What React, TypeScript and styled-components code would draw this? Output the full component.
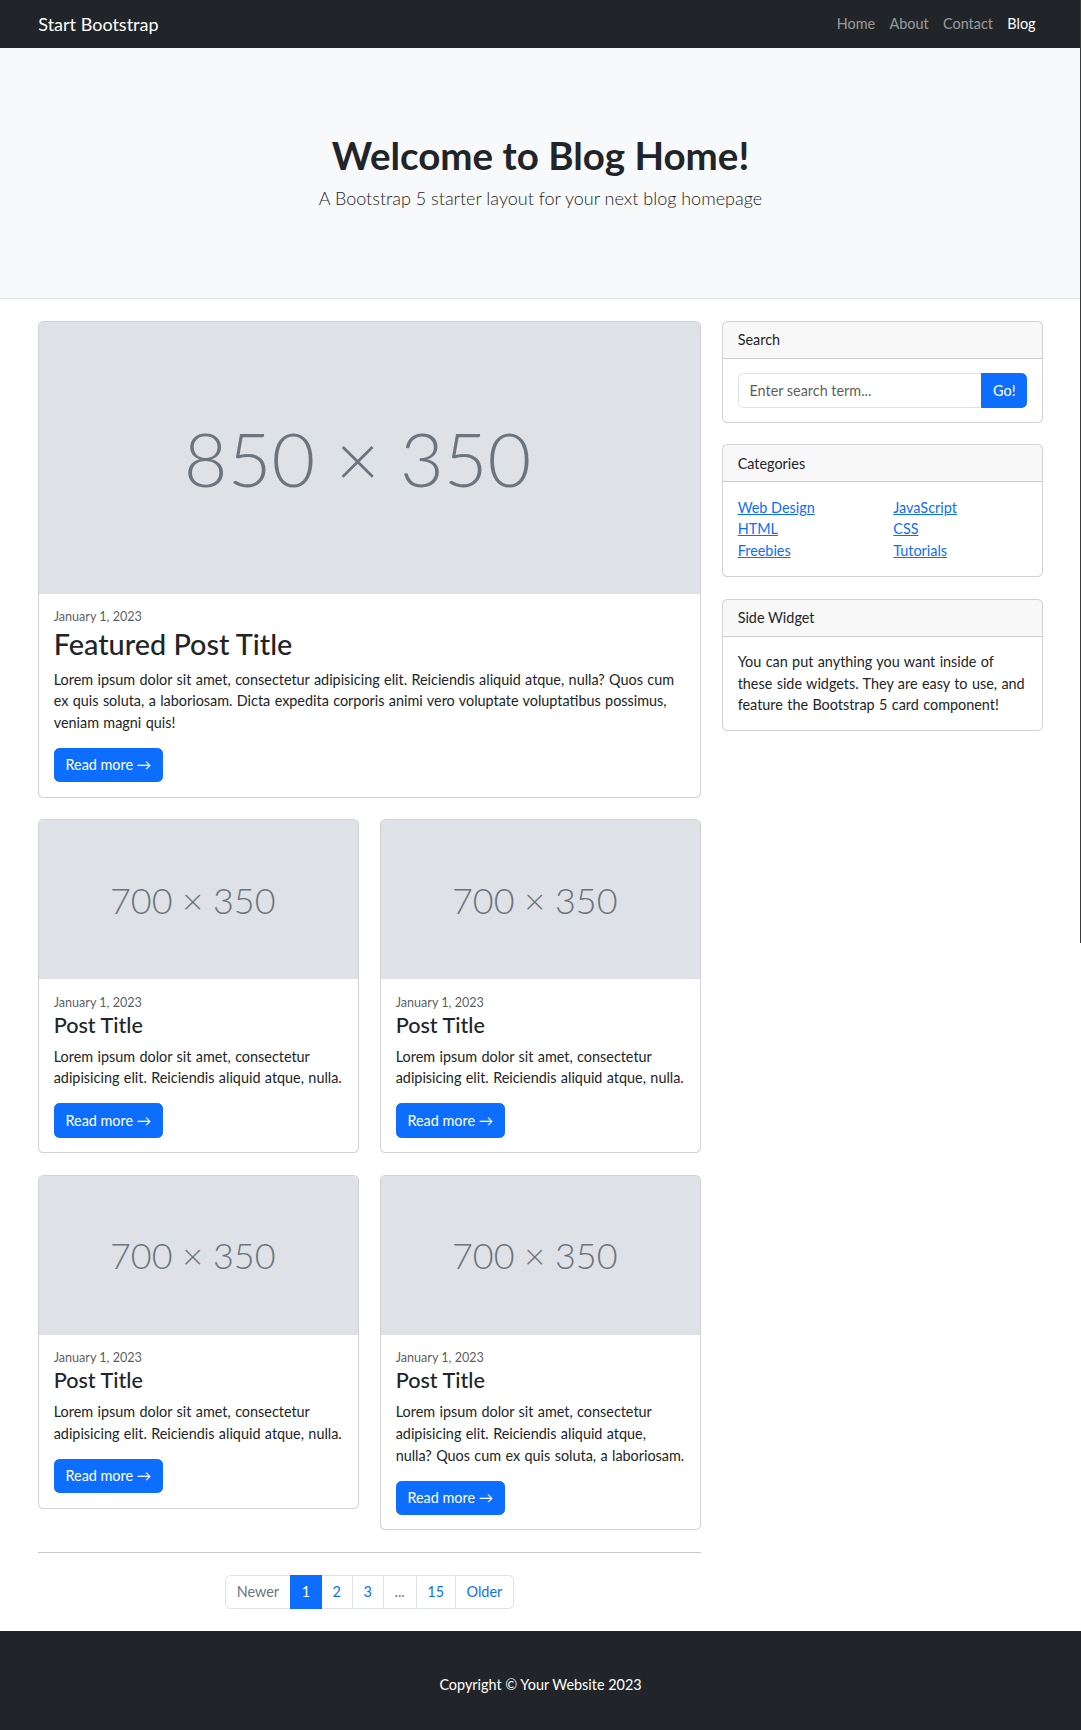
import React from 'react';
import styled, { createGlobalStyle, css } from 'styled-components';

const GlobalStyle = createGlobalStyle`
  html { font-size: 14.4px; }
  *, *::before, *::after { box-sizing: border-box; }
  body {
    margin: 0;
    font-family: "Segoe UI", Lato, "Noto Sans", sans-serif;
    font-size: 1rem;
    line-height: 1.5;
    color: #212529;
    background: #fff;
  }
`;

const Container = styled.div`
  width: 1026px;
  margin: 0 auto;
  padding: 0 10.8px;
`;

/* ---------- Navbar ---------- */
const Navbar = styled.nav`
  background: #212529;
  height: 48px;
  display: flex;
  align-items: center;
`;
const NavInner = styled(Container)`
  display: flex;
  align-items: center;
  justify-content: space-between;
`;
const Brand = styled.a`
  color: #fff;
  font-size: 1.25rem;
  text-decoration: none;
`;
const NavList = styled.ul`
  display: flex;
  list-style: none;
  margin: 0;
  padding: 0;
`;
const NavLink = styled.a<{ $active?: boolean }>`
  display: block;
  padding: 0 0.5rem;
  text-decoration: none;
  color: ${(p) => (p.$active ? '#fff' : 'rgba(255,255,255,0.55)')};
`;

/* ---------- Header ---------- */
const Header = styled.header`
  background: #f8f9fa;
  border-bottom: 1px solid #dee2e6;
  padding: 3rem 0;
  margin-bottom: 1.5rem;
`;
const HeaderInner = styled(Container)`
  text-align: center;
  margin-top: 3rem;
  margin-bottom: 3rem;
`;
const Title = styled.h1`
  font-size: 38.5px;
  font-weight: 700;
  line-height: 43.2px;
  margin: 0 0 0.5rem;
`;
const Lead = styled.p`
  font-size: 1.25rem;
  font-weight: 300;
  margin: 0;
`;

/* ---------- Layout ---------- */
const MainRow = styled.div`
  display: grid;
  grid-template-columns: calc((100% + 1.5rem) * 2 / 3 - 1.5rem) 1fr;
  column-gap: 1.5rem;
  align-items: start;
`;
const PostGrid = styled.div`
  display: grid;
  grid-template-columns: 1fr 1fr;
  column-gap: 1.5rem;
  align-items: start;
`;
const Column = styled.div`
  display: flex;
  flex-direction: column;
`;

/* ---------- Card ---------- */
const Card = styled.div`
  border: 1px solid rgba(0, 0, 0, 0.175);
  border-radius: 0.375rem;
  overflow: hidden;
  margin-bottom: 1.5rem;
  background: #fff;
`;
const Placeholder = styled.div<{ $ratio: string; $size: number }>`
  aspect-ratio: ${(p) => p.$ratio};
  background: #dee2e6;
  color: #6c757d;
  display: flex;
  align-items: center;
  justify-content: center;
  padding-right: 3.6%;
  font-family: "Segoe UI", Lato, "Noto Sans", sans-serif;
  font-weight: 300;
  font-size: ${(p) => p.$size}px;
  line-height: 1;
`;
const CardBody = styled.div`
  padding: 1rem;
`;
const CardHeader = styled.div`
  padding: 0.5rem 1rem;
  background: rgba(33, 37, 41, 0.03);
  border-bottom: 1px solid rgba(0, 0, 0, 0.175);
`;
const PostDate = styled.div`
  font-size: 0.875em;
  color: rgba(33, 37, 41, 0.75);
`;
const PostTitle = styled.h2<{ $large?: boolean }>`
  font-size: ${(p) => (p.$large ? '2rem' : '1.5rem')};
  font-weight: 500;
  line-height: 1.2;
  margin: 0 0 0.5rem;
`;
const PostText = styled.p`
  margin: 0 0 1rem;
  word-spacing: 0.7px;
`;
const WidgetText = styled.div`
  word-spacing: 0.7px;
`;
const buttonBase = css`
  display: inline-block;
  padding: 0.375rem 0.75rem;
  font-family: inherit;
  font-size: 1rem;
  line-height: 1.5;
  color: #fff;
  background: #0d6efd;
  border: 1px solid #0d6efd;
  text-decoration: none;
`;
const Button = styled.a`
  ${buttonBase};
  border-radius: 0.375rem;
`;

/* ---------- Sidebar ---------- */
const InputGroup = styled.div`
  display: flex;
`;
const SearchInput = styled.input`
  flex: 1;
  min-width: 0;
  padding: 0.375rem 0.75rem;
  font-family: inherit;
  font-size: 1rem;
  line-height: 1.5;
  color: #212529;
  border: 1px solid #dee2e6;
  border-radius: 0.375rem 0 0 0.375rem;
  &::placeholder { color: rgba(33, 37, 41, 0.75); }
`;
const GoButton = styled.button`
  ${buttonBase};
  margin-left: -1px;
  border-radius: 0 0.375rem 0.375rem 0;
`;
const CategoryRow = styled.div`
  display: grid;
  grid-template-columns: 1fr 1fr;
  column-gap: 1.5rem;
`;
const CategoryList = styled.ul`
  list-style: none;
  margin: 0;
  padding: 0;
`;
const CategoryLink = styled.a`
  color: #0d6efd;
  text-decoration: underline;
`;

/* ---------- Pagination ---------- */
const Divider = styled.hr`
  margin: 0;
  border: 0;
  border-top: 1px solid #212529;
  opacity: 0.25;
`;
const Pagination = styled.ul`
  display: flex;
  justify-content: center;
  list-style: none;
  padding: 0;
  margin: 1.5rem 0;
`;
const PageItem = styled.li`
  & + & { margin-left: -1px; }
  &:first-child > * { border-radius: 0.375rem 0 0 0.375rem; }
  &:last-child > * { border-radius: 0 0.375rem 0.375rem 0; }
`;
const PageLink = styled.a<{ $active?: boolean; $disabled?: boolean }>`
  position: relative;
  display: block;
  padding: 0.375rem 0.75rem;
  text-decoration: none;
  border: 1px solid ${(p) => (p.$active ? '#0d6efd' : '#dee2e6')};
  background: ${(p) => (p.$active ? '#0d6efd' : '#fff')};
  color: ${(p) => (p.$active ? '#fff' : p.$disabled ? '#6c757d' : '#0d6efd')};
  z-index: ${(p) => (p.$active ? 3 : 'auto')};
`;

/* ---------- Footer ---------- */
const Footer = styled.footer`
  background: #212529;
  padding: 3rem 0;
`;
const Copyright = styled.p`
  margin: 0;
  text-align: center;
  color: #fff;
`;

const ScrollThumb = styled.div`
  position: fixed;
  top: 0;
  right: 0;
  width: 1px;
  height: 943px;
  background: #3a3a3a;
`;

type Post = { text: string };

const shortText = 'Lorem ipsum dolor sit amet, consectetur adipisicing elit. Reiciendis aliquid atque, nulla.';
const longText =
  'Lorem ipsum dolor sit amet, consectetur adipisicing elit. Reiciendis aliquid atque, nulla? Quos cum ex quis soluta, a laboriosam.';

const columns: Post[][] = [
  [{ text: shortText }, { text: shortText }],
  [{ text: shortText }, { text: longText }],
];

const SmallPost: React.FC<Post> = ({ text }) => (
  <Card>
    <Placeholder $ratio="700 / 350" $size={36}>700 × 350</Placeholder>
    <CardBody>
      <PostDate>January 1, 2023</PostDate>
      <PostTitle>Post Title</PostTitle>
      <PostText>{text}</PostText>
      <Button href="#!">Read more →</Button>
    </CardBody>
  </Card>
);

const pages = [
  { label: 'Newer', disabled: true },
  { label: '1', active: true },
  { label: '2' },
  { label: '3' },
  { label: '...', disabled: true },
  { label: '15' },
  { label: 'Older' },
];

export default function App() {
  return (
    <>
      <GlobalStyle />
      <Navbar>
        <NavInner>
          <Brand href="#!">Start Bootstrap</Brand>
          <NavList>
            <li><NavLink href="#">Home</NavLink></li>
            <li><NavLink href="#!">About</NavLink></li>
            <li><NavLink href="#!">Contact</NavLink></li>
            <li><NavLink href="#" $active>Blog</NavLink></li>
          </NavList>
        </NavInner>
      </Navbar>

      <Header>
        <HeaderInner>
          <Title>Welcome to Blog Home!</Title>
          <Lead>A Bootstrap 5 starter layout for your next blog homepage</Lead>
        </HeaderInner>
      </Header>

      <Container>
        <MainRow>
          <div>
            <Card>
              <Placeholder $ratio="850 / 350" $size={75.5}>850 × 350</Placeholder>
              <CardBody>
                <PostDate>January 1, 2023</PostDate>
                <PostTitle $large>Featured Post Title</PostTitle>
                <PostText>
                  Lorem ipsum dolor sit amet, consectetur adipisicing elit. Reiciendis aliquid atque, nulla? Quos cum ex quis
                  soluta, a laboriosam. Dicta expedita corporis animi vero voluptate voluptatibus possimus, veniam magni quis!
                </PostText>
                <Button href="#!">Read more →</Button>
              </CardBody>
            </Card>

            <PostGrid>
              {columns.map((col, i) => (
                <Column key={i}>
                  {col.map((post, j) => (
                    <SmallPost key={j} text={post.text} />
                  ))}
                </Column>
              ))}
            </PostGrid>

            <nav aria-label="Pagination">
              <Divider />
              <Pagination>
                {pages.map((p) => (
                  <PageItem key={p.label}>
                    <PageLink href="#!" $active={p.active} $disabled={p.disabled}>
                      {p.label}
                    </PageLink>
                  </PageItem>
                ))}
              </Pagination>
            </nav>
          </div>

          <div>
            <Card>
              <CardHeader>Search</CardHeader>
              <CardBody>
                <InputGroup>
                  <SearchInput type="text" placeholder="Enter search term..." />
                  <GoButton type="button">Go!</GoButton>
                </InputGroup>
              </CardBody>
            </Card>

            <Card>
              <CardHeader>Categories</CardHeader>
              <CardBody>
                <CategoryRow>
                  <CategoryList>
                    <li><CategoryLink href="#!">Web Design</CategoryLink></li>
                    <li><CategoryLink href="#!">HTML</CategoryLink></li>
                    <li><CategoryLink href="#!">Freebies</CategoryLink></li>
                  </CategoryList>
                  <CategoryList>
                    <li><CategoryLink href="#!">JavaScript</CategoryLink></li>
                    <li><CategoryLink href="#!">CSS</CategoryLink></li>
                    <li><CategoryLink href="#!">Tutorials</CategoryLink></li>
                  </CategoryList>
                </CategoryRow>
              </CardBody>
            </Card>

            <Card>
              <CardHeader>Side Widget</CardHeader>
              <CardBody>
                <WidgetText>
                  You can put anything you want inside of these side widgets. They are easy to use, and feature the
                  Bootstrap 5 card component!
                </WidgetText>
              </CardBody>
            </Card>
          </div>
        </MainRow>
      </Container>

      <Footer>
        <Container>
          <Copyright>Copyright © Your Website 2023</Copyright>
        </Container>
      </Footer>
      <ScrollThumb />
    </>
  );
}
